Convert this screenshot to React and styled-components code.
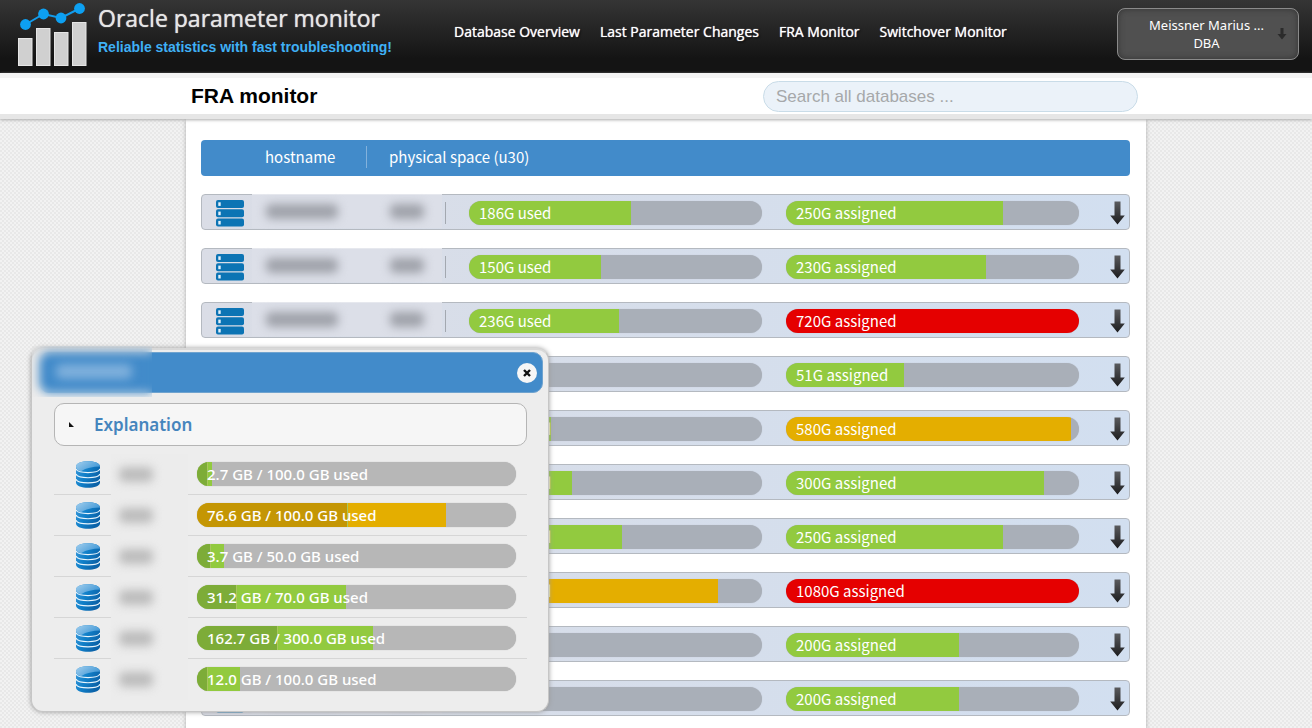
import React, { useId } from "react";
import styled, { createGlobalStyle } from "styled-components";

const GlobalStyle = createGlobalStyle`
  * { box-sizing: border-box; }
  html, body { margin: 0; min-height: 100%; }
  body {
    overflow-x: hidden;
    font-family: "Noto Sans", "Open Sans", sans-serif;
    background-color: #ececec;
    background-image: repeating-conic-gradient(#e8e8e8 0 25%, #f2f2f2 0 50%);
    background-size: 4px 4px;
  }
  #root { height: 100vh; overflow: hidden; }
`;

const row = '"Noto Sans CJK SC", "Noto Sans", sans-serif';

const COLORS = { green: "#92ca3f", orange: "#e4ae00", red: "#e50000" };
const DARK = { green: "#7dac38", orange: "#c49604" };

const Header = styled.header`
  display: flex;
  height: 73px;
  padding: 0 13px 0 18px;
  background: linear-gradient(#353535, #141414 80%);
  color: #fff;
`;

const Brand = styled.a`
  display: flex;
  gap: 11px;
  width: 436px;
  flex: none;
  color: #e6e6e6;
  text-decoration: none;
`;

const BrandText = styled.span`
  display: flex;
  flex-direction: column;
  white-space: nowrap;
`;

const BrandTitle = styled.span`
  font: 400 23px/36px "Open Sans", sans-serif;
  text-shadow: 0 0 1px #e6e6e6;
`;

const Tagline = styled.span`
  font: 700 14px/22px "Liberation Sans", Arial, sans-serif;
  color: #3fb0f5;
`;

const Nav = styled.nav`
  flex: 1;
  display: flex;
  gap: 20px;
  padding-top: 22px;
`;

const NavLink = styled.a`
  font: 400 14px/20px "Open Sans", sans-serif;
  color: #fff;
  text-decoration: none;
  white-space: nowrap;
  text-shadow: 0 0 1px #fff, 1px 1px 2px #000;
`;

const UserButton = styled.button`
  display: flex;
  align-items: center;
  width: 182px;
  height: 52px;
  margin-top: 8px;
  padding: 0 11px 0 18px;
  border: 1px solid #8a8a8a;
  border-radius: 8px;
  background: #505050;
  box-shadow: inset 0 0 6px #333;
  color: #fff;
  font: 400 13px/18px "Noto Sans", sans-serif;
`;

const UserText = styled.span`
  flex: 1;
  display: flex;
  flex-direction: column;
  white-space: nowrap;
`;

const SubHeader = styled.div`
  position: relative;
  height: 46px;
  border-top: 5px solid #f4f4f4;
  border-bottom: 5px solid #e6e6e6;
  background: #fff;
  box-shadow: 0 1px 3px #aaa;
`;

const Centered = styled.div`
  width: 960px;
  max-width: 100%;
  margin: 0 auto;
`;

const Shell = styled.div`
  padding-left: 20px;
`;

const TitleBar = styled(Centered)`
  display: flex;
  justify-content: space-between;
  align-items: center;
  height: 36px;
  padding: 0 8px 0 5px;
`;

const PageTitle = styled.h1`
  margin: 0;
  font: 700 21px/30px "Liberation Sans", Arial, sans-serif;
  color: #000;
`;

const Search = styled.input`
  width: 375px;
  height: 31px;
  padding: 1px 12px 0;
  border: 1px solid #c9dce8;
  border-radius: 16px;
  background: #ebf2f9;
  font: 400 17px/20px "Liberation Sans", Arial, sans-serif;
  color: #333;
  &::placeholder { color: #a6a8aa; opacity: 1; }
`;

const Content = styled(Centered)`
  min-height: 100vh;
  padding: 21px 16px 0 15px;
  background: #fff;
  box-shadow: 0 0 4px #aaa;
`;

const HeadRow = styled.div`
  display: flex;
  align-items: center;
  height: 36px;
  margin-bottom: 18px;
  padding: 0 0 2px 64px;
  border-radius: 4px;
  background: #428bca;
  color: #fff;
  font: 400 15px/22px ${row};
`;

const HeadCell = styled.span`
  width: 101px;
  & + & {
    width: auto;
    padding-left: 22px;
    border-left: 1px solid #83b2dc;
  }
`;

const HostList = styled.ul`
  display: flex;
  flex-direction: column;
  gap: 18px;
  margin: 0;
  padding: 0;
  list-style: none;
`;

const HostRow = styled.li`
  display: flex;
  align-items: center;
  height: 36px;
  padding: 2px 4px 0 14px;
  border: 1px solid #b4b9c0;
  border-radius: 4px;
  background: linear-gradient(90deg, #dadde6, #d2dff0);
`;

const HostName = styled.div`
  display: flex;
  align-items: center;
  align-self: stretch;
  gap: 52px;
  width: 190px;
  margin: -3px 3px 1px 8px;
  padding-left: 14px;
  background: #dcdfe8;
  border-top: 1px solid #e6e8ee;
`;

const Smudge = styled.span`
  width: ${(p) => p.$width}px;
  height: 15px;
  border-radius: 5px;
  background: ${(p) => p.$color || "#9fa2aa"};
  filter: blur(5px);
`;

const Divider = styled.span`
  width: 1px;
  height: 22px;
  margin-right: 23px;
  background: #a3a8b0;
`;

const Bars = styled.div`
  flex: 1;
  display: flex;
  gap: 24px;
`;

const Track = styled.div`
  position: relative;
  flex: ${(p) => (p.$soft ? "1" : "0 1 293px")};
  height: 24px;
  overflow: hidden;
  border-radius: 12px;
  background: ${(p) => (p.$soft ? "#b7b7b7" : "#a9afb8")};
  box-shadow: 0 0 1px ${(p) => (p.$soft ? "#aaa" : "#b5bbc6")};
`;

const Fill = styled.div`
  position: absolute;
  inset: 0 auto 0 0;
  background: ${(p) => p.$color};
  border-right: ${(p) => (p.$edge ? "1px solid #a9c65e" : "0")};
`;

const BarLabel = styled.span`
  position: relative;
  display: block;
  padding-left: 10px;
  color: #fff;
  white-space: nowrap;
  font: ${(p) => (p.$soft ? '500 15px/24px "Noto Sans", sans-serif' : `400 15px/24px ${row}`)};
`;

const IconButton = styled.button`
  display: flex;
  padding: 0;
  border: 0;
  background: none;
`;

const Dialog = styled.section`
  position: absolute;
  left: 31px;
  top: 348px;
  width: 518px;
  height: 364px;
  padding: 2px 5px 0 7px;
  border: 1px solid #c6c6c6;
  border-top: 2px solid #d8d8d8;
  border-radius: 12px;
  background: #ededed;
  box-shadow: 0 0 5px #999;
`;

const DialogHead = styled.div`
  display: flex;
  justify-content: flex-end;
  align-items: center;
  height: 41px;
  padding-right: 5px;
  border: 1px solid #6fa3cf;
  border-radius: 10px;
  background: #428bca;
`;

const CloseButton = styled.button`
  display: flex;
  justify-content: center;
  align-items: center;
  width: 20px;
  height: 20px;
  padding: 0;
  border: 0;
  border-radius: 10px;
  background: #f6f6f6;
`;

const TitleCover = styled.div`
  position: absolute;
  left: 0;
  top: -4px;
  width: 120px;
  height: 51px;
  display: flex;
  align-items: center;
  padding-left: 24px;
  backdrop-filter: blur(5px);
`;

const DialogBody = styled.div`
  padding: 10px 16px 0 15px;
`;

const Explanation = styled.button`
  display: flex;
  align-items: center;
  gap: 20px;
  width: 100%;
  height: 43px;
  margin-bottom: 8px;
  padding: 0 14px;
  border: 1px solid #b5b5b5;
  border-radius: 10px;
  background: #f6f6f6;
  color: #4585bd;
  font: 600 17px/24px "Noto Sans", sans-serif;
`;

const UsageList = styled.ul`
  margin: 0;
  padding: 0;
  list-style: none;
`;

const UsageRow = styled.li`
  display: flex;
  align-items: center;
  height: 41px;
  padding: 0 11px 0 22px;
  border-bottom: 1px solid #d6d6d6;
  &:last-child { border-bottom-color: transparent; }
`;

const DbName = styled.div`
  display: flex;
  align-items: center;
  align-self: stretch;
  width: 77px;
  margin: 0 9px -1px 11px;
  padding-left: 8px;
  background: #ececec;
`;

function Logo() {
  return (
    <svg width="69" height="73" viewBox="18 0 69 73" aria-hidden="true">
      <g fill="#d0d0d0" stroke="#e6e6e6" strokeWidth="1">
        <rect x="18.5" y="38.5" width="13.5" height="27" />
        <rect x="36.5" y="28.5" width="13.5" height="37" />
        <rect x="54.5" y="32.5" width="13.5" height="33" />
        <rect x="72.5" y="22.5" width="13.5" height="43" />
      </g>
      <path d="M25.5 24.5 43.5 14 61 18 79.5 8.5" fill="none" stroke="#149bea" strokeWidth="2" />
      <g fill="#0da0f2">
        <circle cx="25.5" cy="24.5" r="5.4" />
        <circle cx="43.5" cy="14" r="5.4" />
        <circle cx="61" cy="18" r="5.4" />
        <circle cx="79.5" cy="8.5" r="5.4" />
      </g>
    </svg>
  );
}

function ServerIcon() {
  return (
    <svg width="28" height="27" viewBox="0 0 28 27" aria-hidden="true">
      <g fill="#0c74b4">
        <rect width="28" height="8" rx="2" />
        <rect y="9.3" width="28" height="8" rx="2" />
        <rect y="18.6" width="28" height="8" rx="2" />
      </g>
      <g fill="#e3f1fa">
        <rect x="2.3" y="2.3" width="2.4" height="3.6" />
        <rect x="2.3" y="11.6" width="2.4" height="3.6" />
        <rect x="2.3" y="20.9" width="2.4" height="3.6" />
      </g>
    </svg>
  );
}

function ArrowIcon() {
  const id = useId();
  return (
    <svg width="16" height="24" viewBox="0 0 16 24" aria-hidden="true">
      <linearGradient id={id} x2="0" y2="1">
        <stop offset="0" stopColor="#5a5b5e" />
        <stop offset="1" stopColor="#1c1c1e" />
      </linearGradient>
      <path d="M5.500 0.5h6v14h4.300L8.500 23.500 1.200 14.500h4.300z" fill={`url(#${id})`} />
    </svg>
  );
}

function DatabaseIcon() {
  const id = useId();
  return (
    <svg width="24" height="27" viewBox="0 0 24 27" aria-hidden="true">
      <linearGradient id={id} x2="1" y2=".5">
        <stop offset="0" stopColor="#3d9bdc" />
        <stop offset=".5" stopColor="#1180c9" />
        <stop offset="1" stopColor="#0b62a8" />
      </linearGradient>
      <linearGradient id={`${id}top`} x2="1" y2=".6">
        <stop offset="0" stopColor="#a3cfee" />
        <stop offset="1" stopColor="#3f97d6" />
      </linearGradient>
      <path d="M0 5.500C0-1.600 24-1.600 24 5.500v16c0 7-24 7-24 0z" fill={`url(#${id})`} />
      <path d="M0 5.500C0-1.600 24-1.600 24 5.500 17 5.500 10 7 5 10.200 2 9.500 0 8 0 5.500z" fill={`url(#${id}top)`} />
      <path
        d="M0 7.800c1.500 5 22.500 5 24 0M0 13c1.500 5 22.500 5 24 0M0 18.200c1.500 5 22.500 5 24 0"
        fill="none"
        stroke="#e8f5fd"
        strokeWidth="1.200"
      />
    </svg>
  );
}

const NAV = ["Database Overview", "Last Parameter Changes", "FRA Monitor", "Switchover Monitor"];

const HOSTS = [
  { used: ["186G", 55.3, "green"], assigned: ["250G", 74.1, "green"] },
  { used: ["150G", 45, "green"], assigned: ["230G", 68.3, "green"] },
  { used: ["236G", 51.2, "green"], assigned: ["720G", 100, "red"] },
  { used: ["20G", 16, "green"], assigned: ["51G", 40.3, "green"] },
  { used: ["163G", 28, "green"], assigned: ["580G", 97.3, "orange"] },
  { used: ["120G", 35.2, "green"], assigned: ["300G", 88.1, "green"] },
  { used: ["176G", 52.2, "green"], assigned: ["250G", 74.1, "green"] },
  { used: ["830G", 85, "orange"], assigned: ["1080G", 100, "red"] },
  { used: ["40G", 14, "green"], assigned: ["200G", 59, "green"] },
  { used: ["36G", 12, "green"], assigned: ["200G", 59, "green"] },
];

const USAGE = [
  { label: "2.7 GB / 100.0 GB used", dark: 3.6, light: 4.7, color: "green" },
  { label: "76.6 GB / 100.0 GB used", dark: 47.4, light: 78.1, color: "orange" },
  { label: "3.7 GB / 50.0 GB used", dark: 4.4, light: 8.5, color: "green" },
  { label: "31.2 GB / 70.0 GB used", dark: 12.4, light: 46.6, color: "green" },
  { label: "162.7 GB / 300.0 GB used", dark: 25.4, light: 55.2, color: "green" },
  { label: "12.0 GB / 100.0 GB used", dark: 3.6, light: 13.5, color: "green" },
];

function Meter({ data: [size, percent, color], kind }) {
  return (
    <Track>
      <Fill $color={COLORS[color]} style={{ width: `${percent}%` }} />
      <BarLabel>{size} {kind}</BarLabel>
    </Track>
  );
}

export default function App() {
  return (
    <>
      <GlobalStyle />
      <Header>
        <Brand href="#">
          <Logo />
          <BrandText>
            <BrandTitle>Oracle parameter monitor</BrandTitle>
            <Tagline>Reliable statistics with fast troubleshooting!</Tagline>
          </BrandText>
        </Brand>
        <Nav>
          {NAV.map((item) => (
            <NavLink key={item} href="#">{item}</NavLink>
          ))}
        </Nav>
        <UserButton type="button">
          <UserText>
            <span>Meissner Marius ...</span>
            <span>DBA</span>
          </UserText>
          <svg width="10" height="12" viewBox="0 0 10 12" aria-hidden="true">
            <path d="M3.500 0h3v6H9.500L5 11.500.5 6h3z" fill="#2b2b2b" />
          </svg>
        </UserButton>
      </Header>
      <SubHeader>
        <Shell>
          <TitleBar>
            <PageTitle>FRA monitor</PageTitle>
            <Search type="search" aria-label="Search all databases" placeholder="Search all databases ..." />
          </TitleBar>
        </Shell>
      </SubHeader>
      <Shell>
        <Content as="main">
          <HeadRow>
            <HeadCell>hostname</HeadCell>
            <HeadCell>physical space (u30)</HeadCell>
          </HeadRow>
          <HostList>
            {HOSTS.map((host, i) => (
              <HostRow key={i}>
                <ServerIcon />
                <HostName>
                  <Smudge $width={72} />
                  <Smudge $width={34} />
                </HostName>
                <Divider />
                <Bars>
                  <Meter data={host.used} kind="used" />
                  <Meter data={host.assigned} kind="assigned" />
                </Bars>
                <IconButton type="button" aria-label="Show details">
                  <ArrowIcon />
                </IconButton>
              </HostRow>
            ))}
          </HostList>
        </Content>
      </Shell>
      <Dialog role="dialog" aria-label="Database usage">
        <DialogHead>
          <CloseButton type="button" aria-label="Close">
            <svg width="8" height="8" viewBox="0 0 8 8" aria-hidden="true">
              <path d="M1 1l6 6M7 1L1 7" stroke="#111" strokeWidth="2.400" />
            </svg>
          </CloseButton>
        </DialogHead>
        <TitleCover>
          <Smudge $width={76} $color="#7fb0dc" />
        </TitleCover>
        <DialogBody>
          <Explanation type="button">
            <svg width="5" height="5" viewBox="0 0 5 5" aria-hidden="true">
              <path d="M0 0l5 5H0z" fill="#111" />
            </svg>
            Explanation
          </Explanation>
          <UsageList>
            {USAGE.map((db) => (
              <UsageRow key={db.label}>
                <DatabaseIcon />
                <DbName>
                  <Smudge $width={34} $color="#bcbcbc" />
                </DbName>
                <Track $soft>
                  <Fill $color={COLORS[db.color]} style={{ width: `${db.light}%` }} />
                  <Fill $color={DARK[db.color]} $edge style={{ width: `${db.dark}%` }} />
                  <BarLabel $soft>{db.label}</BarLabel>
                </Track>
              </UsageRow>
            ))}
          </UsageList>
        </DialogBody>
      </Dialog>
    </>
  );
}
